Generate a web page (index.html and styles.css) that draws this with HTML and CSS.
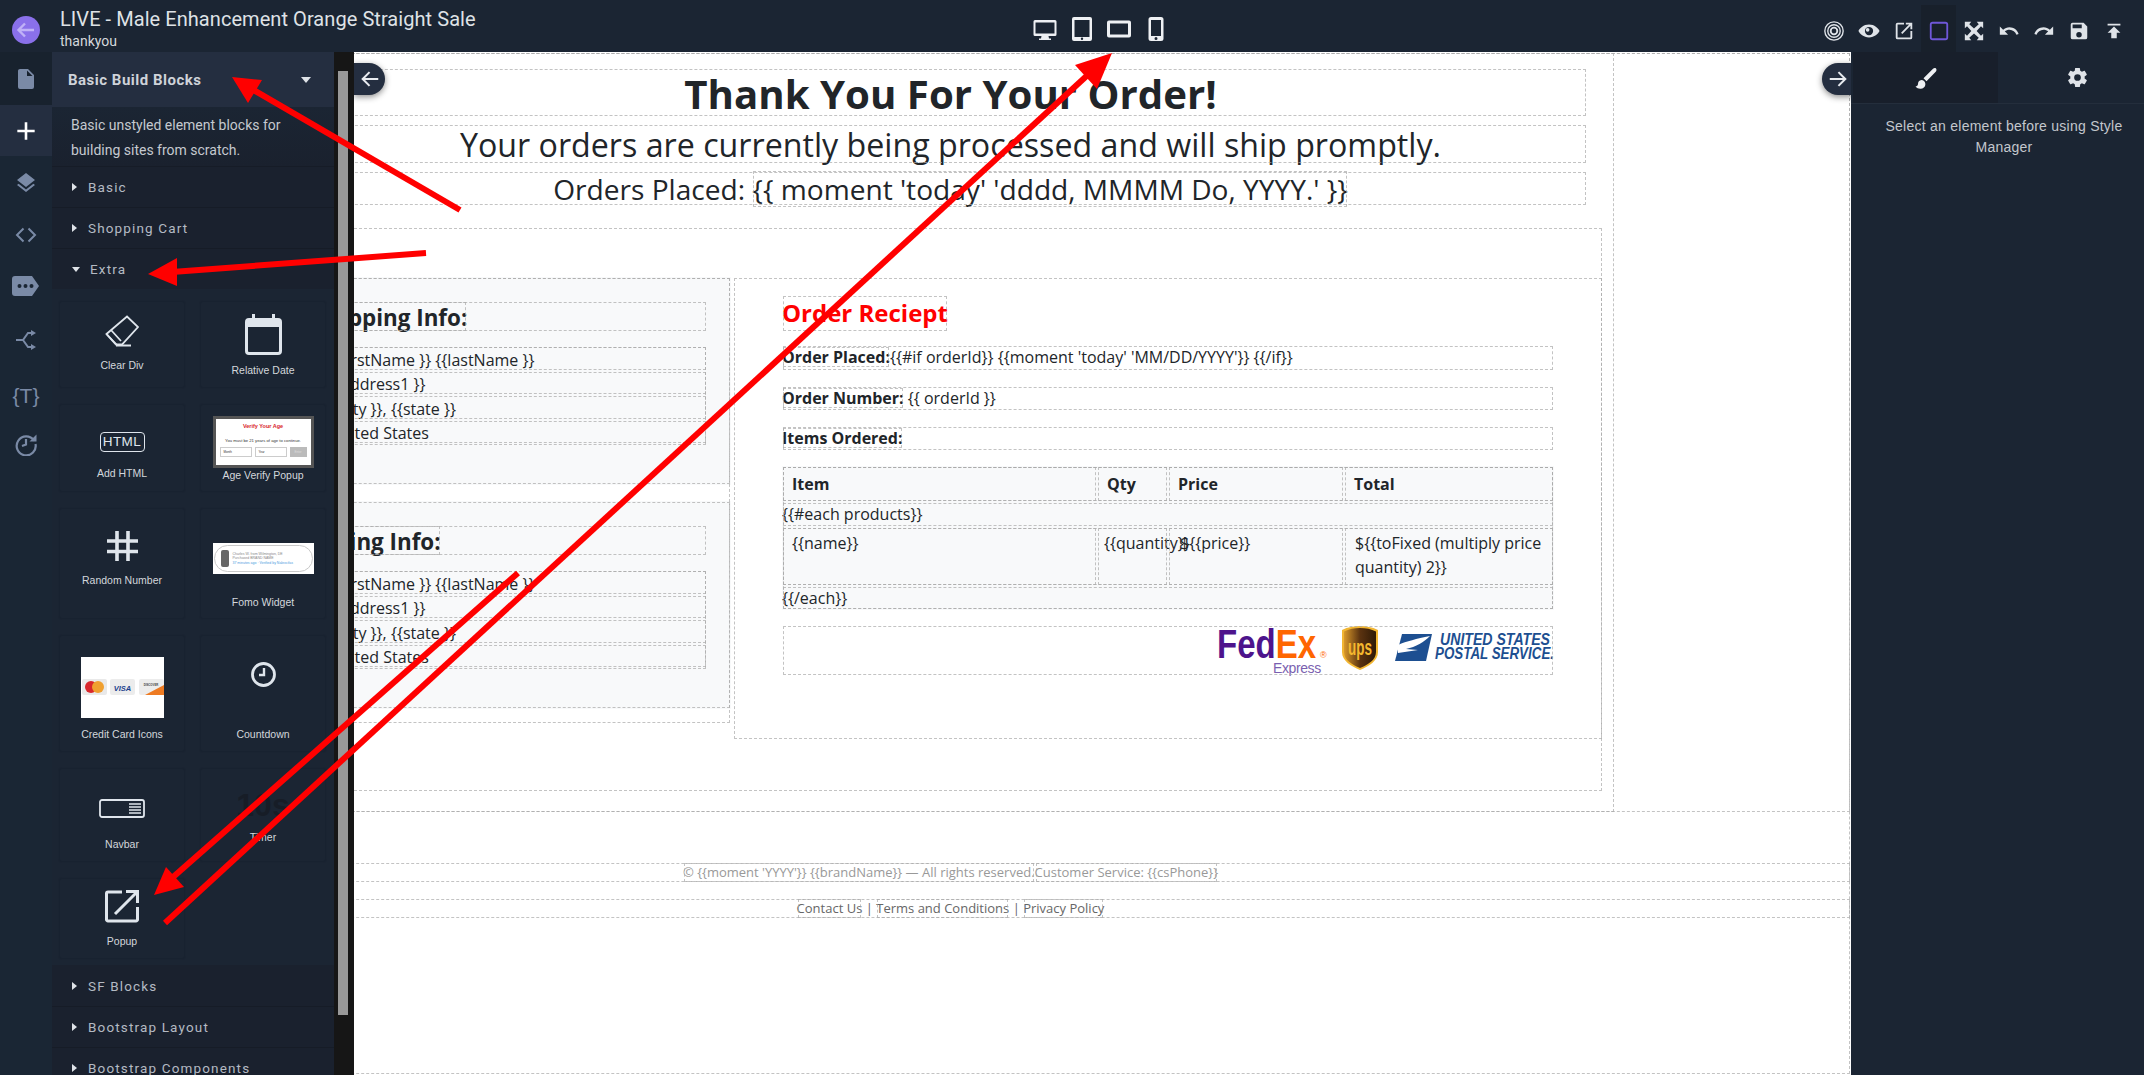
FILE: index.html
```html
<!DOCTYPE html>
<html lang="en">
<head>
<meta charset="utf-8">
<title>Page builder</title>
<link rel="stylesheet" href="styles.css">
</head>
<body>
<header class="topbar">
  <div class="brand">
    <svg class="back" viewBox="0 0 28 28"><circle cx="14" cy="14" r="14" fill="#8a70ea"/><path d="M22 14H7M13 7.500L6.500 14l6.500 6.500" fill="none" stroke="#c0b2f7" stroke-width="2.400"/></svg>
    <div class="titles">
      <div class="title">LIVE - Male Enhancement Orange Straight Sale</div>
      <div class="subtitle">thankyou</div>
    </div>
  </div>
  <div class="devices">
    <svg class="dev" viewBox="0 0 24 24"><path d="M2 3h20a1.500 1.500 0 0 1 1.500 1.500v13A1.500 1.500 0 0 1 22 19h-6.500l.5 2.500h2V23H6v-1.500h2l.5-2.500H2A1.500 1.500 0 0 1 .5 17.500v-13A1.500 1.500 0 0 1 2 3zm.5 2.500v11h19v-11z"/></svg>
    <svg class="dev" viewBox="0 0 24 24"><path fill-rule="evenodd" d="M4 0h16a2 2 0 0 1 2 2v20a2 2 0 0 1-2 2H4a2 2 0 0 1-2-2V2a2 2 0 0 1 2-2zm.5 3v17h15V3zM12 20.600a1.200 1.200 0 1 0 0 2.400 1.200 1.200 0 0 0 0-2.400z"/></svg>
    <svg class="dev" viewBox="0 0 24 24"><path fill-rule="evenodd" d="M2 3.500h20a2 2 0 0 1 2 2v13a2 2 0 0 1-2 2H2a2 2 0 0 1-2-2v-13a2 2 0 0 1 2-2zM3 6.500v11h18v-11z"/></svg>
    <svg class="dev" viewBox="0 0 24 24"><path fill-rule="evenodd" d="M7 0h10a2.500 2.500 0 0 1 2.500 2.500v19A2.500 2.500 0 0 1 17 24H7a2.500 2.500 0 0 1-2.500-2.500v-19A2.500 2.500 0 0 1 7 0zM7 3v16h10V3zm5 17a1.500 1.500 0 1 0 0 3 1.500 1.500 0 0 0 0-3z"/></svg>
  </div>
  <div class="actions">
    <span class="act"><svg viewBox="0 0 24 24" fill="none" stroke="#dfe3e8"><circle cx="12" cy="12" r="10" stroke-width="1.500"/><circle cx="12" cy="12" r="6.800" stroke-width="1.500"/><circle cx="12" cy="12" r="3.600" stroke-width="2"/></svg></span>
    <span class="act"><svg viewBox="0 0 24 24"><path fill="#dfe3e8" fill-rule="evenodd" d="M12 5C6 5 2 9 .500 12 2 15 6 19 12 19s10-4 11.500-7C22 9 18 5 12 5zm0 2.500a4.500 4.500 0 1 1 0 9 4.500 4.500 0 0 1 0-9zm-1.500 1.200a2 2 0 1 0 0 4 2 2 0 0 0 0-4z"/></svg></span>
    <span class="act"><svg viewBox="0 0 24 24"><path fill="#dfe3e8" d="M5 3h7v2H5v14h14v-7h2v7a2 2 0 0 1-2 2H5a2 2 0 0 1-2-2V5a2 2 0 0 1 2-2zm9 0h7v7h-2V6.400l-8.800 8.800-1.400-1.400L17.600 5H14z"/></svg></span>
    <span class="act act-on"><svg viewBox="0 0 24 24"><rect x="3" y="3" width="18" height="18" rx="2" fill="none" stroke="#6f57d8" stroke-width="2"/></svg></span>
    <span class="act"><svg viewBox="0 0 24 24"><path fill="#dfe3e8" d="M2 2h7L6.800 4.600 12 9.200l5.200-4.600L15 2h7v7l-2.400-2.200-4.700 5.200 4.700 5.200L22 15v7h-7l2.200-2.600-5.200-4.600-5.200 4.600L9 22H2v-7l2.400 2.200L9.100 12 4.400 6.800 2 9z"/></svg></span>
    <span class="act"><svg viewBox="0 0 24 24"><path fill="#dfe3e8" d="M12.500 8c-2.650 0-5.050.99-6.900 2.600L2 7v9h9l-3.620-3.620c1.390-1.160 3.160-1.880 5.120-1.880 3.540 0 6.550 2.310 7.600 5.500l2.370-.78C21.080 11.030 17.150 8 12.500 8z"/></svg></span>
    <span class="act"><svg viewBox="0 0 24 24"><path fill="#dfe3e8" d="M18.400 10.600C16.550 8.990 14.150 8 11.500 8c-4.650 0-8.580 3.030-9.960 7.220L3.900 16c1.050-3.190 4.050-5.500 7.600-5.500 1.950 0 3.730.72 5.120 1.880L13 16h9V7l-3.600 3.600z"/></svg></span>
    <span class="act"><svg viewBox="0 0 24 24"><path fill="#dfe3e8" d="M15 9H5V5h10m-3 14a3 3 0 0 1-3-3 3 3 0 0 1 3-3 3 3 0 0 1 3 3 3 3 0 0 1-3 3m5-16H5a2 2 0 0 0-2 2v14a2 2 0 0 0 2 2h14a2 2 0 0 0 2-2V7l-4-4z"/></svg></span>
    <span class="act"><svg viewBox="0 0 24 24"><path fill="#dfe3e8" d="M5 4v2h14V4H5zm0 10h4v6h6v-6h4l-7-7-7 7z"/></svg></span>
  </div>
</header>

<div class="workspace">
  <nav class="rail">
    <span class="rail-item"><svg class="ri" viewBox="0 0 24 24"><path d="M13 9V3.500L18.500 9M6 2c-1.110 0-2 .89-2 2v16a2 2 0 0 0 2 2h12a2 2 0 0 0 2-2V8l-6-6H6z"/></svg></span>
    <span class="rail-item rail-on"><svg class="ri ri-plus" viewBox="0 0 24 24"><path d="M20 13.200h-6.800V20h-2.400v-6.800H4v-2.400h6.800V4h2.400v6.800H20z"/></svg></span>
    <span class="rail-item"><svg class="ri" viewBox="0 0 24 24"><path d="M12 16l7.360-5.730L21 9l-9-7-9 7 1.630 1.270M12 18.540l-7.380-5.730L3 14.070l9 7 9-7-1.630-1.270L12 18.540z"/></svg></span>
    <span class="rail-item"><svg class="ri ri-line" viewBox="0 0 24 24" stroke="#7a8aa6" stroke-width="2"><path d="M9.500 5.500 3 12l6.500 6.500M14.500 5.500 21 12l-6.500 6.500"/></svg></span>
    <span class="rail-item"><svg class="ri ri-tag" viewBox="0 0 28 24"><path fill-rule="evenodd" d="M3 2h17l7 10-7 10H3a3 3 0 0 1-3-3V5a3 3 0 0 1 3-3zm4.500 8a2 2 0 1 0 0 4 2 2 0 0 0 0-4zm6 0a2 2 0 1 0 0 4 2 2 0 0 0 0-4zm6 0a2 2 0 1 0 0 4 2 2 0 0 0 0-4z"/></svg></span>
    <span class="rail-item"><svg class="ri ri-line" viewBox="0 0 24 24" stroke="#7a8aa6" stroke-width="2"><path d="M2 12h7l5-7h5M9 12l5 7h5"/><path d="M17 2l5 3-5 3zM17 16l5 3-5 3z" fill="#7a8aa6" stroke="none"/></svg></span>
    <span class="rail-item rail-text">{T}</span>
    <span class="rail-item"><svg class="ri ri-line" viewBox="0 0 24 24" stroke="#7a8aa6" stroke-width="2.200"><path d="M20 8.500A9.500 9.500 0 1 0 21.500 12"/><path d="M12 7v5.500L8 14"/><path d="M22.500 2.500v7h-7z" fill="#7a8aa6" stroke="none"/></svg></span>
  </nav>

  <aside class="panel">
    <div class="panel-head"><span>Basic Build Blocks</span><i class="caret-down caret-lg"></i></div>
    <p class="panel-desc">Basic unstyled element blocks for building sites from scratch.</p>
    <div class="cat"><i class="caret-right"></i><span>Basic</span></div>
    <div class="cat"><i class="caret-right"></i><span>Shopping Cart</span></div>
    <div class="cat cat-open"><i class="caret-down"></i><span>Extra</span></div>
    <div class="blocks">
      <div class="block b-clear">
        <svg class="ic-clear" viewBox="0 0 34 32" fill="none" stroke="#dfe5ec" stroke-width="1.800"><path d="M1.500 19 22 1.500 33 12 17 29.500H11z"/><path d="M1.500 19l10 10.500M6 15l10 11M11 30.500h15"/></svg>
        <span class="label">Clear Div</span>
      </div>
      <div class="block b-date">
        <svg class="ic-date" viewBox="0 0 37 41"><path fill="#dfe5ec" fill-rule="evenodd" d="M7 0h3v4h17V0h3v4h3a4 4 0 0 1 4 4v29a4 4 0 0 1-4 4H4a4 4 0 0 1-4-4V8a4 4 0 0 1 4-4h3zM3 13v24a1 1 0 0 0 1 1h29a1 1 0 0 0 1-1V13z"/></svg>
        <span class="label">Relative Date</span>
      </div>
      <div class="block b-html">
        <span class="ic-html">HTML</span>
        <span class="label">Add HTML</span>
      </div>
      <div class="block b-age">
        <div class="thumb-age">
          <div class="age-title">Verify Your Age</div>
          <div class="age-text">You must be 21 years of age to continue.</div>
          <div class="age-row"><span class="age-sel">Month</span><span class="age-sel">Year</span><span class="age-btn">Enter</span></div>
        </div>
        <span class="label">Age Verify Popup</span>
      </div>
      <div class="block b-rand">
        <svg class="ic-rand" viewBox="0 0 31 30" fill="none" stroke="#dfe5ec" stroke-width="3.600"><path d="M10 0v30M21 0v30M0 10h31M0 20.500h31"/></svg>
        <span class="label">Random Number</span>
      </div>
      <div class="block b-fomo">
        <div class="thumb-fomo">
          <div class="fomo-pill">
            <span class="fomo-bottle"></span>
            <div class="fomo-lines"><span>Charles W. from Wilmington, DE</span><span>Purchased BRAND NAME</span><span class="fomo-blue">37 minutes ago · Verified by Nalexcifas</span></div>
          </div>
        </div>
        <span class="label">Fomo Widget</span>
      </div>
      <div class="block b-card">
        <svg class="thumb-card" viewBox="0 0 83 61">
          <rect width="83" height="61" fill="#fff"/>
          <g transform="translate(0 -2)">
            <rect x="1" y="24" width="25" height="16" rx="2" fill="#e9e9e9"/><circle cx="10" cy="32" r="6" fill="#d8262c"/><circle cx="17" cy="32" r="6" fill="#f0a030"/>
            <rect x="29" y="24" width="25" height="16" rx="2" fill="#ececec"/><text class="visa" x="41.500" y="35.500">VISA</text>
            <rect x="58" y="24" width="25" height="16" rx="2" fill="#ececec"/><path d="M83 30v10H64z" fill="#ee7b22"/><text class="disc" x="70" y="31">DISCOVER</text>
          </g>
        </svg>
        <span class="label">Credit Card Icons</span>
      </div>
      <div class="block b-count">
        <svg class="ic-count" viewBox="0 0 25 25" fill="none" stroke="#dfe5ec" stroke-width="2.800"><circle cx="12.500" cy="12.500" r="11"/><path d="M13 6v7H8" stroke-width="2.400"/></svg>
        <span class="label">Countdown</span>
      </div>
      <div class="block b-nav">
        <svg class="ic-nav" viewBox="0 0 46 19" fill="none" stroke="#dfe5ec"><rect x="1" y="1" width="44" height="17" rx="2" stroke-width="1.800"/><path d="M30 5h12M30 8h12M30 11h12M30 14h12" stroke-width="1.600"/></svg>
        <span class="label">Navbar</span>
      </div>
      <div class="block b-timer">
        <span class="ic-timer">10s</span>
        <span class="label">Timer</span>
      </div>
      <div class="block b-pop">
        <svg class="ic-pop" viewBox="0 0 34 33" fill="none" stroke="#dfe5ec" stroke-width="3"><path d="M17 2H3a1.500 1.500 0 0 0-1.500 1.500v26A1.500 1.500 0 0 0 3 31h28a1.500 1.500 0 0 0 1.500-1.500V17"/><path d="M10 24 32 2M21 1.500h11.500V13"/></svg>
        <span class="label">Popup</span>
      </div>
    </div>
    <div class="cat cat-line"><i class="caret-right"></i><span>SF Blocks</span></div>
    <div class="cat"><i class="caret-right"></i><span>Bootstrap Layout</span></div>
    <div class="cat"><i class="caret-right"></i><span>Bootstrap Components</span></div>
  </aside>

  <div class="scroll"><div class="scroll-thumb"></div></div>

  <main class="canvas">
    <div class="doc d">
      <section class="sec d">
        <div class="container d">
          <div class="heads">
            <h1 class="h1 d">Thank You For Your Order!</h1>
            <h2 class="h2 d">Your orders are currently being processed and will ship promptly.</h2>
            <h3 class="h3 d">Orders Placed: <span class="d">{{ moment 'today' 'dddd, MMMM Do, YYYY.' }}</span></h3>
          </div>
          <div class="row d">
            <div class="col-left d">
              <div class="info d">
                <h4 class="info-h d"><span class="d">Shipping Info:</span></h4>
                <ul class="addr d">
                  <li class="d">{{firstName }} {{lastName }}</li>
                  <li class="d">{{address1 }}</li>
                  <li class="d">{{city }}, {{state }}</li>
                  <li class="d">United States</li>
                </ul>
              </div>
              <div class="info info-2 d">
                <h4 class="info-h d"><span class="d">Billing Info:</span></h4>
                <ul class="addr d">
                  <li class="d">{{firstName }} {{lastName }}</li>
                  <li class="d">{{address1 }}</li>
                  <li class="d">{{city }}, {{state }}</li>
                  <li class="d">United States</li>
                </ul>
              </div>
            </div>
            <div class="col-right d">
              <div class="receipt">
                <h4 class="rc-title d">Order Reciept</h4>
                <p class="rc-line rc-l1 d"><b class="d">Order Placed:</b>{{#if orderId}} {{moment 'today' 'MM/DD/YYYY'}} {{/if}}</p>
                <p class="rc-line d"><b class="d">Order Number:</b> {{ orderId }}</p>
                <p class="rc-line d"><b class="d">Items Ordered:</b></p>
                <table class="tbl d">
                  <colgroup><col class="c1"><col class="c2"><col class="c3"><col class="c4"></colgroup>
                  <tr class="tr-h d"><th class="d">Item</th><th class="d">Qty</th><th class="d">Price</th><th class="d">Total</th></tr>
                  <tr class="tr-each d"><td colspan="4">{{#each products}}</td></tr>
                  <tr class="tr-item d"><td class="d">{{name}}</td><td class="d">{{quantity}}</td><td class="d">${{price}}</td><td class="d">${{toFixed (multiply price quantity) 2}}</td></tr>
                  <tr class="tr-end d"><td colspan="4">{{/each}}</td></tr>
                </table>
                <div class="logos d">
                  <svg class="lg-fedex" viewBox="0 0 112 48"><text class="fx" x="-1" y="30" textLength="99" lengthAdjust="spacingAndGlyphs"><tspan fill="#4d148c">Fed</tspan><tspan fill="#ff6600">Ex</tspan></text><text class="fx-r" x="102" y="30">®</text><text class="fx-e" x="55" y="45">Express</text></svg>
                  <svg class="lg-ups" viewBox="0 0 36 44"><defs><linearGradient id="ug" x1="0" y1="0" x2="1" y2="0"><stop offset="0" stop-color="#d9982a"/><stop offset=".5" stop-color="#5b3310"/><stop offset="1" stop-color="#2f1a06"/></linearGradient></defs><path d="M18 0c6 0 12 1 18 4v22c0 9-9 14-18 18C9 40 0 35 0 26V4c6-3 12-4 18-4z" fill="#f2b632"/><path d="M18 2c6 0 11 1 16 3.500V26c0 8-8 12.500-16 16C10 38.500 2 34 2 26V5.500C7 3 12 2 18 2z" fill="url(#ug)"/><text class="ups" x="6" y="29" textLength="24" lengthAdjust="spacingAndGlyphs">ups</text></svg>
                  <svg class="lg-usps" viewBox="0 0 159 28"><path d="M7 1h30l-6 27H0z" fill="#1d4f91"/><path d="M3 12c9-4 18-6 32-9-6 6-14 11-24 13l12 1-20 3z" fill="#fff"/><text class="us" x="45" y="12" textLength="110" lengthAdjust="spacingAndGlyphs">UNITED STATES</text><text class="us" x="40" y="26" textLength="119" lengthAdjust="spacingAndGlyphs">POSTAL SERVICE.</text></svg>
                </div>
              </div>
            </div>
          </div>
        </div>
      </section>
      <footer class="foot">
        <div class="copy d"><span class="d">© {{moment 'YYYY'}} {{brandName}} — All rights reserved.</span><span class="d">Customer Service: {{csPhone}}</span></div>
        <div class="links d"><span class="d">Contact Us</span> | <span class="d">Terms and Conditions</span> | <span class="d">Privacy Policy</span></div>
      </footer>
    </div>
    <div class="toggle toggle-l"><svg viewBox="0 0 24 24" fill="none" stroke="#e8ebf0" stroke-width="2.200"><path d="M21 12H4M11.500 4.500 4 12l7.500 7.500"/></svg></div>
    <div class="toggle toggle-r"><svg viewBox="0 0 24 24" fill="none" stroke="#e8ebf0" stroke-width="2.200"><path d="M3 12h17M12.500 4.500 20 12l-7.500 7.500"/></svg></div>
  </main>

  <aside class="side">
    <div class="tabs">
      <div class="tab tab-on"><svg viewBox="0 0 24 24"><path fill="#eef0f3" d="M22 2.500c-.8-.8-2-.6-3 .3L9.500 12.200l3 3L21.700 5.700c.9-1 1.100-2.400.3-3.200zM7.500 14A4 4 0 0 0 4 18c0 1.500-1.200 2.300-2.500 2.500C3 22.200 5 23 7 22.700c3-.4 4.700-2.900 4.300-5.300-.3-2-1.900-3.400-3.800-3.400z"/></svg></div>
      <div class="tab tab-gear"><svg viewBox="0 0 24 24"><path fill="#dfe3e8" d="M12 15.500A3.500 3.500 0 0 1 8.500 12 3.500 3.500 0 0 1 12 8.500a3.500 3.500 0 0 1 3.500 3.500 3.500 3.500 0 0 1-3.500 3.500m7.430-2.530c.04-.32.07-.64.07-.97s-.03-.66-.07-1l2.110-1.630c.19-.15.24-.42.12-.64l-2-3.460c-.12-.22-.39-.31-.61-.22l-2.490 1c-.52-.39-1.060-.73-1.690-.98l-.37-2.650A.506.506 0 0 0 14 2h-4c-.25 0-.46.18-.5.42l-.37 2.650c-.63.25-1.170.59-1.690.98l-2.490-1c-.22-.09-.49 0-.61.22l-2 3.460c-.13.22-.07.49.12.64L4.570 11c-.04.34-.07.67-.07 1s.03.65.07.97l-2.110 1.660c-.19.15-.25.42-.12.64l2 3.460c.12.22.39.3.61.22l2.490-1.010c.52.4 1.060.74 1.690.99l.37 2.650c.04.24.25.42.5.42h4c.25 0 .46-.18.5-.42l.37-2.650c.63-.26 1.170-.59 1.690-.99l2.490 1.010c.22.08.49 0 .61-.22l2-3.460c.12-.22.07-.49-.12-.64l-2.110-1.660z"/></svg></div>
    </div>
    <p class="side-msg">Select an element before using Style Manager</p>
  </aside>
</div>

<svg class="arrows" viewBox="0 0 2144 1075">
  <g stroke="#ff0000" stroke-width="6" fill="#ff0000">
    <path d="M460 210 250 88"/>
    <path d="M426 253 172 272"/>
    <path d="M165 923 1092 71"/>
    <path d="M518 573 172 878"/>
  </g>
  <g fill="#ff0000">
    <polygon points="232,77 262,80 248,103"/>
    <polygon points="148,274 177,258 177,286"/>
    <polygon points="1112,53 1097,89 1075,65"/>
    <polygon points="154,895 166,867 184,887"/>
  </g>
</svg>
</body>
</html>
```
FILE: styles.css
```css
* { box-sizing: border-box; }
html, body { margin: 0; padding: 0; height: 100%; }
body {
  width: 2144px; height: 1075px; overflow: hidden; position: relative;
  background: #1b2533; font-family: Roboto, "Liberation Sans", sans-serif; color: #dfe3e8;
}
svg { display: block; }

/* top bar */
.topbar { height: 52px; display: flex; align-items: center; background: #1b2533; }
.brand { width: 1033px; display: flex; align-items: flex-start; height: 52px; }
.back { width: 28px; height: 28px; margin: 16px 0 0 12px; flex: none; }
.titles { margin-left: 20px; padding-top: 7px; }
.title { font-size: 20px; line-height: 25px; letter-spacing: .06px; color: #dfe2e6; white-space: nowrap; }
.subtitle { font-size: 14px; line-height: 19px; color: #d5d8dc; }
.devices { display: flex; gap: 13px; align-items: center; margin-top: 6px; }
.dev { width: 24px; height: 24px; fill: #eef0f3; }
.actions { margin-left: auto; margin-right: 13px; display: flex; }
.act { width: 35px; height: 47px; margin-top: 5px; display: flex; align-items: center; justify-content: center; padding-top: 4px; }
.act svg { width: 22px; height: 22px; }
.act-on { background: #18202b; }

/* workspace */
.workspace { display: flex; height: 1023px; }
.rail { width: 52px; flex: none; background: #1a2634; display: flex; flex-direction: column; }
.rail-item { height: 53px; flex: none; display: flex; align-items: center; justify-content: center; }
.rail-item:nth-child(1) { background: #18222e; }
.rail-on { background: #242e40; height: 51px; }
.rail-item:nth-child(3) { height: 54px; }
.rail-item:nth-child(4) { height: 50px; }
.rail-item:nth-child(5) { height: 52px; }
.rail-item:nth-child(6) { height: 56px; }
.rail-item:nth-child(7) { height: 56px; }
.rail-item:nth-child(8) { height: 40px; }
.ri { width: 24px; height: 24px; fill: #7a8aa6; }
.ri-line { fill: none; }
.ri-plus { width: 26px; height: 26px; fill: #fff; }
.ri-tag { width: 28px; height: 24px; }
.rail-text { font-size: 21px; color: #7a8aa6; font-family: "Liberation Sans", sans-serif; }

.panel { width: 282px; flex: none; background: #1b2533; overflow: hidden; }
.panel-head { height: 55px; background: #242e40; display: flex; align-items: center; justify-content: space-between; padding: 0 23px 0 16px; font-size: 15px; font-weight: 700; color: #cfd3d9; letter-spacing: .5px; }
.panel-desc { margin: 0; height: 59px; padding: 6px 16px 0 19px; font-size: 14px; line-height: 24.500px; color: #c5c9cf; background: linear-gradient(#1b2533, #1a212e); }
.cat { height: 41px; background: #1a212e; border-top: 1px solid #161c27; display: flex; align-items: center; padding-left: 20px; font-size: 13.500px; letter-spacing: 1.150px; color: #b4bac3; }
.cat span { margin-left: 6px; padding-left: 5px; }
.cat-open span { margin-left: 1px; padding-left: 5px; }
.cat-line { border-top: 0; }
.caret-right { width: 0; height: 0; border-left: 5px solid #dfe3e8; border-top: 4px solid transparent; border-bottom: 4px solid transparent; }
.caret-down { width: 0; height: 0; border-top: 5px solid #dfe3e8; border-left: 4px solid transparent; border-right: 4px solid transparent; margin-right: 4px; }
.caret-lg { border-top-width: 6px; border-left-width: 5px; border-right-width: 5px; margin: 0; }

.blocks {
  display: grid; grid-template-columns: 126px 126px; column-gap: 15px;
  grid-template-rows: 87px 88px 111px 117px 94px 81px; row-gap: 16px;
  padding: 12px 0 6px 7px;
}
.block { display: flex; flex-direction: column; align-items: center; border: 1px solid #182230; border-radius: 3px; box-shadow: 0 0 1px #161e29; }
.label { font-size: 10.500px; line-height: 14px; color: #d3d7dc; white-space: nowrap; font-family: "Liberation Sans", sans-serif; }
.b-clear { padding-top: 13px; gap: 11px; }
.b-date { padding-top: 12px; gap: 8px; }
.b-html { padding-top: 27px; gap: 14px; }
.b-age { padding-top: 11px; gap: 0; }
.b-rand { padding-top: 22px; gap: 12px; }
.b-fomo { padding-top: 34px; gap: 21px; }
.b-card { padding-top: 21px; gap: 9px; }
.b-count { padding-top: 26px; gap: 40px; }
.b-nav { padding-top: 30px; gap: 19px; }
.b-timer { padding-top: 21px; gap: 10px; }
.b-pop { padding-top: 11px; gap: 11px; }
.ic-clear { width: 34px; height: 32px; }
.ic-date { width: 37px; height: 41px; }
.ic-html { width: 45px; height: 20px; border: 1.500px solid #dfe5ec; border-radius: 4px; font: 13.500px/17px "Liberation Sans", sans-serif; text-align: center; color: #dfe5ec; letter-spacing: .4px; }
.ic-rand { width: 31px; height: 30px; }
.ic-count { width: 25px; height: 25px; }
.ic-nav { width: 46px; height: 19px; }
.ic-timer { font: 700 32px/30px "Liberation Sans", sans-serif; color: #171d27; }
.ic-pop { width: 34px; height: 33px; }
.thumb-age { width: 101px; height: 52px; background: #fff; border: 3px solid #555; color: #333; text-align: center; font-family: "Liberation Sans", sans-serif; }
.age-title { font-size: 5.500px; line-height: 6px; font-weight: 700; color: #d8232a; margin-top: 4px; }
.age-text { font-size: 4.200px; line-height: 5px; margin-top: 9px; white-space: nowrap; }
.age-row { display: flex; gap: 3px; margin: 4px 4px 0; }
.age-sel { flex: 1; height: 10px; border: 1px solid #ccc; font-size: 3px; line-height: 8px; text-align: left; padding-left: 3px; }
.age-btn { width: 17px; height: 10px; background: #bbb; color: #ddd; font-size: 3px; line-height: 10px; }
.thumb-fomo { width: 101px; height: 31px; background: #fff; padding: 2px 1px; }
.fomo-pill { height: 27px; border: 1px solid #c9c9c9; border-radius: 14px; display: flex; align-items: center; padding-left: 6px; gap: 4px; }
.fomo-bottle { width: 8px; height: 17px; background: #666; border-radius: 2px; }
.fomo-lines { display: flex; flex-direction: column; font: 3.500px/4.500px "Liberation Sans", sans-serif; color: #888; white-space: nowrap; }
.fomo-blue { color: #4a9be0; }
.thumb-card { width: 83px; height: 61px; }
.visa { font: italic 700 7.500px "Liberation Sans", sans-serif; fill: #1a3f8c; text-anchor: middle; }
.disc { font: 700 2.800px "Liberation Sans", sans-serif; fill: #444; text-anchor: middle; }

.scroll { width: 20px; flex: none; background: #161616; padding: 19px 4px 0; }
.scroll-thumb { width: 10px; height: 944px; background: #999; }

/* canvas */
.canvas { width: 1497px; flex: none; background: #fff; overflow: hidden; position: relative; color: #212529; font-family: "Open Sans", sans-serif; }
.d { outline: 1px dashed rgba(170, 170, 170, .7); outline-offset: -2px; }
.doc { margin-left: -304px; width: 1801px; height: 1023px; }
.sec { height: 761px; }
.container { width: 1329px; height: 761px; margin-left: 236px; padding: 16px 12px 0; }
.heads { padding: 0 16px; }
h1, h2, h3, h4, p, ul { margin: 0; }
.h1 { height: 49px; padding-top: 1px; font-size: 40.200px; line-height: 49px; font-weight: 700; text-align: center; }
.h2 { height: 40px; padding-top: 1px; margin-top: 7px; font-size: 32.200px; line-height: 40px; font-weight: 400; text-align: center; }
.h3 { height: 35px; padding-top: 1px; margin-top: 7px; font-size: 28.100px; line-height: 35px; font-weight: 400; text-align: center; }
.row { height: 565px; margin-top: 21px; padding-top: 50px; display: flex; gap: 2px; align-items: flex-start; }
.col-left { width: 433px; height: 447px; }
.info { height: 208px; background: #f8f9fa; padding: 24px 24px 0 16px; }
.info-2 { margin-top: 16px; }
.info-h { height: 31px; font-size: 22.400px; line-height: 33px; font-weight: 700; }
.info-h span { display: inline-block; height: 31px; vertical-align: top; }
.addr { list-style: none; padding: 0; margin-top: 14px; height: 100px; font-size: 16px; line-height: 24px; }
.addr li { height: 24.500px; padding: 1.500px 0 0 15px; white-space: nowrap; }
.col-right { flex: 1; height: 463px; padding: 18px 49px 0 49px; }
.receipt { width: 772px; }
.rc-title { display: inline-block; height: 37px; font-size: 24px; line-height: 35px; font-weight: 700; color: #f00; vertical-align: top; }
.rc-line { height: 25px; margin-top: 15px; font-size: 16px; line-height: 25px; white-space: nowrap; }
.rc-l1 { height: 26px; margin-top: 13px; }
.tbl { width: 772px; height: 144px; margin-top: 15px; table-layout: fixed; border-collapse: collapse; border-spacing: 0; background: #f8f9fa; font-size: 16px; line-height: 24px; }
.c1 { width: 315px; } .c2 { width: 71px; } .c3 { width: 176px; } .c4 { width: 210px; }
.tbl th { text-align: left; font-weight: 700; padding: 0 10px; }
.tbl td { padding: 0; vertical-align: top; }
.tr-h { height: 36px; }
.tr-each { height: 25px; }
.tr-item { height: 59px; }
.tr-end { height: 24px; }
.tr-item td { padding: 4px 9px 0 10px; white-space: normal; }
.tr-item td:nth-child(2) { white-space: nowrap; padding-left: 7px; }
.tr-item td:nth-child(3) { padding-left: 12px; }
.tr-item td:nth-child(4) { padding-left: 11px; padding-right: 4px; }
.logos { height: 51px; margin-top: 15px; display: flex; justify-content: flex-end; align-items: flex-start; }
.lg-fedex { width: 112px; height: 48px; margin-top: 3px; }
.fx { font: 700 41px "Liberation Sans", sans-serif; }
.fx-r { font: 9px "Liberation Sans", sans-serif; fill: #ff6600; }
.fx-e { font: 14px "Liberation Sans", sans-serif; fill: #7a5fb0; letter-spacing: -.4px; }
.lg-ups { width: 36px; height: 44px; margin: 1px 0 0 12px; }
.ups { font: 700 22px "Liberation Sans", sans-serif; fill: #f5b82e; }
.lg-usps { width: 159px; height: 28px; margin: 8px 0 0 17px; }
.us { font: italic 700 16px "Liberation Sans", sans-serif; fill: #1d4f91; }
.foot { text-align: center; color: #999; font-size: 13px; line-height: 20px; }
.copy { height: 21px; margin-top: 49px; }
.copy span { display: inline-block; height: 21px; vertical-align: top; }
.links { height: 21px; margin-top: 15px; color: #666; }
.links span { display: inline-block; height: 21px; vertical-align: top; }
.toggle { position: absolute; top: 11px; width: 31px; height: 32px; background: #242e40; display: flex; align-items: center; justify-content: center; box-shadow: 0 2px 6px rgba(0, 0, 0, .45); }
.toggle svg { width: 22px; height: 22px; }
.toggle-l { left: 0; border-radius: 0 16px 16px 0; }
.toggle-r { right: -2px; border-radius: 16px 0 0 16px; }

/* right */
.side { flex: 1; background: #1b2533; position: relative; }
.tabs { height: 52px; display: flex; border-bottom: 1px solid #242e3c; }
.tab { display: flex; align-items: center; justify-content: center; }
.tab svg { width: 24px; height: 24px; }
.tab-on { width: 145px; background: #181f2b; margin-left: 2px; flex: none; }
.tab-gear { flex: 1; padding-left: 12px; }
.tab-gear svg { width: 23px; height: 23px; }
.side-msg { margin: 0; padding: 12px 14px 0 27px; text-align: center; font: 14px/21px "Liberation Sans", sans-serif; letter-spacing: .25px; color: #c3c7cd; }

/* annotation overlay */
.arrows { position: absolute; left: 0; top: 0; width: 2144px; height: 1075px; pointer-events: none; }
```
